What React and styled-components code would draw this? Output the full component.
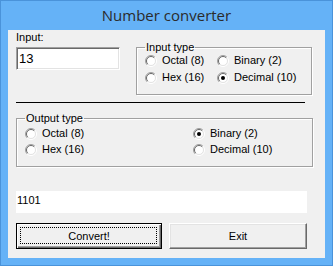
import React from 'react'
import styled, { createGlobalStyle } from 'styled-components'

const GlobalStyle = createGlobalStyle`
  html, body {
    margin: 0;
    padding: 0;
    background: #ffffff;
  }
  * {
    box-sizing: border-box;
  }
`

const Window = styled.div`
  width: 333px;
  height: 266px;
  display: flex;
  flex-direction: column;
  background: #65b2f7;
  border: 1px solid #4a93da;
  padding: 0 7px 7px;
`
const TitleBar = styled.div`
  height: 29px;
  display: flex;
  align-items: center;
  justify-content: center;
  font-family: 'Open Sans', 'Noto Sans', sans-serif;
  font-size: 15px;
  color: #2b2b2b;
  padding-bottom: 1px;
`
const Client = styled.div`
  flex: 1;
  display: flex;
  flex-direction: column;
  background: #f0f0f0;
  padding: 1px 0 0 8px;
  font-family: 'Liberation Sans', Arial, sans-serif;
  font-size: 11px;
  line-height: 13px;
  color: #000;
`
const TopRow = styled.div`
  display: flex;
  align-items: flex-start;
  gap: 16px;
`
const InputColumn = styled.div`
  width: 104px;
  display: flex;
  flex-direction: column;
  gap: 3px;
`
const Label = styled.div`
  height: 13px;
`
const TextBox = styled.div`
  height: ${(p) => (p.flat ? '22px' : '23px')};
  width: ${(p) => p.width}px;
  margin-top: ${(p) => p.offset || 0}px;
  background: #fff;
  padding: ${(p) => (p.flat ? '3px 1px' : '4px 2px')};
  ${(p) =>
    !p.flat &&
    `
    border: 1px solid;
    border-color: #a0a0a0 #ffffff #ffffff #a0a0a0;
    box-shadow: inset 1px 1px #696969, inset -1px -1px #e3e3e3;
  `}
  font-size: ${(p) => (p.flat ? '11px' : '13px')};
  line-height: 13px;
`
const Group = styled.fieldset`
  margin: ${(p) => p.margin || 0};
  width: ${(p) => p.width}px;
  min-width: 0;
  padding: ${(p) => p.pad || '0'} 0 10px 8px;
  border: 1px solid #a0a0a0;
  box-shadow: 1px 1px 0 #ffffff, inset 1px 1px 0 #ffffff;
`
const Legend = styled.legend`
  padding: 0 1px;
  margin-left: 0;
  line-height: 13px;
  font-size: 11px;
`
const RadioGrid = styled.div`
  display: grid;
  grid-template-columns: ${(p) => p.col}px auto;
  row-gap: ${(p) => p.gap}px;
`
const RadioItem = styled.div`
  display: flex;
  align-items: center;
  gap: 5px;
  height: 13px;
  white-space: nowrap;
`
const Separator = styled.div`
  width: 289px;
  height: 1px;
  background: #000;
  margin: 7px 0 9px;
`
const ButtonRow = styled.div`
  display: flex;
  gap: 7px;
  margin-top: 10px;
`
const Button = styled.div`
  position: relative;
  width: ${(p) => p.width}px;
  height: 26px;
  display: flex;
  align-items: center;
  justify-content: center;
  background: #f0f0f0;
  border: 1px solid;
  border-color: ${(p) =>
    p.primary ? '#000' : '#ffffff #696969 #696969 #ffffff'};
  box-shadow: ${(p) =>
    p.primary
      ? 'inset 1px 1px #ffffff, inset -1px -1px #696969, inset -2px -2px #a0a0a0'
      : 'inset -1px -1px #a0a0a0, inset 1px 1px #e3e3e3'};
  font-size: 11px;

  ${(p) =>
    p.primary &&
    `
    &::after {
      content: '';
      position: absolute;
      inset: 3px 4px 4px 3px;
      border: 1px dotted #000;
    }
  `}
`

function Radio({ checked }) {
  return (
    <svg width="12" height="12" viewBox="0 0 12 12">
      <circle cx="6" cy="6" r="4.5" fill="#ffffff" />
      <path d="M2.1 9.9 A5.5 5.5 0 0 1 9.9 2.1" stroke="#a0a0a0" fill="none" />
      <path d="M9.9 2.1 A5.5 5.5 0 0 1 2.1 9.9" stroke="#ffffff" fill="none" />
      <path d="M2.8 9.2 A4.5 4.5 0 0 1 9.2 2.8" stroke="#696969" fill="none" />
      <path d="M9.2 2.8 A4.5 4.5 0 0 1 2.8 9.2" stroke="#e3e3e3" fill="none" />
      {checked && <circle cx="6" cy="6" r="2" fill="#000" />}
    </svg>
  )
}

const inputTypes = [
  { label: 'Octal (8)' },
  { label: 'Binary (2)' },
  { label: 'Hex (16)' },
  { label: 'Decimal (10)', checked: true },
]
const outputTypes = [
  { label: 'Octal (8)' },
  { label: 'Binary (2)', checked: true },
  { label: 'Hex (16)' },
  { label: 'Decimal (10)' },
]

export default function App() {
  return (
    <>
      <GlobalStyle />
      <Window>
        <TitleBar>Number converter</TitleBar>
        <Client>
          <TopRow>
            <InputColumn>
              <Label>Input:</Label>
              <TextBox width={104}>13</TextBox>
            </InputColumn>
            <Group width={176} margin="10px 0 0">
              <Legend>Input type</Legend>
              <RadioGrid col={72} gap={4}>
                {inputTypes.map((t) => (
                  <RadioItem key={t.label}>
                    <Radio checked={t.checked} />
                    {t.label}
                  </RadioItem>
                ))}
              </RadioGrid>
            </Group>
          </TopRow>
          <Separator />
          <Group width={297} pad="2px">
            <Legend>Output type</Legend>
            <RadioGrid col={168} gap={3}>
              {outputTypes.map((t) => (
                <RadioItem key={t.label}>
                  <Radio checked={t.checked} />
                  {t.label}
                </RadioItem>
              ))}
            </RadioGrid>
          </Group>
          <TextBox flat width={291} offset={24}>
            1101
          </TextBox>
          <ButtonRow>
            <Button primary width={146}>
              Convert!
            </Button>
            <Button width={138}>Exit</Button>
          </ButtonRow>
        </Client>
      </Window>
    </>
  )
}
